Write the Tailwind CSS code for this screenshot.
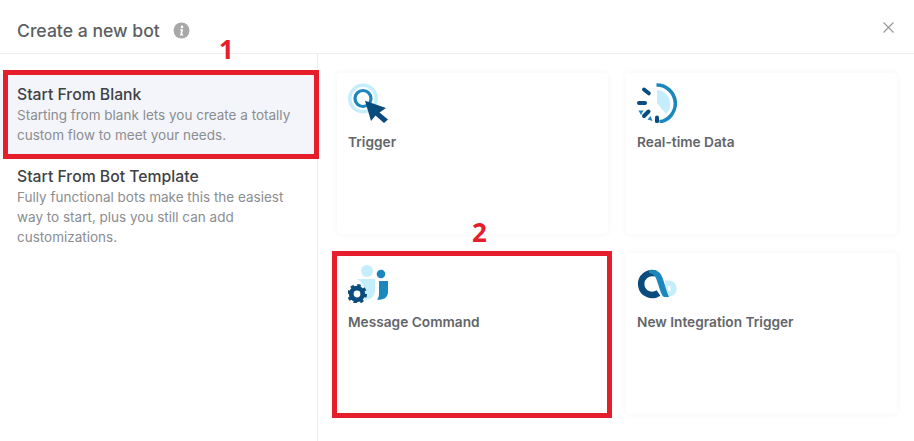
<!DOCTYPE html>
<html lang="en">
<head>
    <meta charset="UTF-8">
    <title>Create a new bot</title>
    <script src="https://cdn.jsdelivr.net/npm/@tailwindcss/browser@4"></script>
</head>
<body class="bg-white font-['Inter',sans-serif] antialiased">
<div class="relative w-[914px] h-[441px] overflow-hidden bg-white">

    <!-- Header -->
    <header class="h-[54px] border-b border-[#eeeeee] pl-[17px] pr-[20px] flex items-center">
        <h1 class="text-[17.6px] font-medium text-[#5c5f62] mt-[9px]">Create a new bot</h1>
        <svg class="ml-[13px] mt-[8px] w-[17px] h-[17px]" viewBox="0 0 17 17">
            <circle cx="8.5" cy="8.5" r="8" fill="#a8a8a8"/>
            <circle cx="9" cy="4.9" r="1.3" fill="#fff"/>
            <path d="M7.2 7.3h2.9l-1 5h1v1.2H7.1l1-5h-.9z" fill="#fff"/>
        </svg>
        <svg class="ml-auto mt-[2px] w-[11px] h-[11px]" viewBox="0 0 11 11" fill="none" stroke="#9a9a9a" stroke-width="1.2">
            <path d="M.5.5l10 10M10.5.5l-10 10"/>
        </svg>
    </header>

    <div class="flex h-[387px]">
        <!-- Left menu -->
        <aside class="w-[318px] shrink-0 border-r border-[#eeeeee] pt-[21px]">
            <div class="h-[80px] bg-[#f4f5fa] pl-[17px] pr-3 pt-[11px] mt-[-1px]">
                <h2 class="text-[15.75px] leading-[20px] font-medium text-[#3f4246]">Start From Blank</h2>
                <p class="text-[13.5px] leading-[20px] text-[#8a8d91]">Starting from blank lets you create a totally custom flow to meet your needs.</p>
            </div>
            <div class="pl-[17px] pr-3 pt-[13px]">
                <h2 class="text-[15.75px] leading-[20px] font-medium text-[#3f4246]">Start From Bot Template</h2>
                <p class="text-[13.5px] leading-[20px] text-[#8a8d91]">Fully functional bots make this the easiest way to start, plus you still can add customizations.</p>
            </div>
        </aside>

        <!-- Trigger cards -->
        <main class="flex-1 grid grid-cols-[271px_271px] auto-rows-[161px] gap-x-[18px] gap-y-[19px] pl-[19px] pt-[19px]">
            <div class="rounded-[4px] bg-white shadow-[0_0_6px_rgba(60,70,110,0.06)] pl-[11px] pt-[10px]">
                <svg class="w-[40px] h-[40px]" viewBox="0 0 40 40">
                    <circle cx="15" cy="15.500" r="15" fill="#c4eefb"/>
                    <circle cx="15" cy="15.500" r="11.500" fill="#fff"/>
                    <circle cx="15" cy="15.500" r="8" fill="none" stroke="#1b87bd" stroke-width="3.200"/>
                    <path d="M17 17.700l21 7.300-6.500 4.500 8.500 7-4 3.500-8.500-7.500-4.500 5.500z" fill="#0a4c7d"/>
                </svg>
                <h3 class="mt-[9px] text-[13.7px] leading-[20px] font-semibold text-[#636569]">Trigger</h3>
            </div>
            <div class="rounded-[4px] bg-white shadow-[0_0_6px_rgba(60,70,110,0.06)] pl-[11px] pt-[10px]">
                <svg class="w-[40px] h-[40px]" viewBox="0 0 40 40">
                    <path d="M20 7v13l9 11A14 14 0 0 0 20 7z" fill="#c4eefb"/>
                    <path d="M19.500 2a18.500 18.500 0 0 1 3 36.800" fill="none" stroke="#1b87bd" stroke-width="3.600"/>
                    <g fill="none" stroke="#0a4c7d" stroke-width="4" stroke-linecap="round">
                        <path d="M7 6.500l4.800 3.800"/>
                        <path d="M2 20h6"/>
                        <path d="M7 33l4.500-4.500"/>
                        <path d="M20 34.500v3.800"/>
                    </g>
                    <path d="M1.500 27.500h5l-2.500 4.500zM10.500 36.500l3-3.500 2 5z" fill="#1b87bd"/>
                </svg>
                <h3 class="mt-[9px] text-[13.7px] leading-[20px] font-semibold text-[#636569]">Real-time Data</h3>
            </div>
            <div class="rounded-[4px] bg-white shadow-[0_0_6px_rgba(60,70,110,0.06)] pl-[11px] pt-[10px]">
                <svg class="w-[42px] h-[40px]" viewBox="0 0 42 40">
                    <circle cx="19" cy="8" r="6" fill="#c4eefb"/>
                    <path d="M9 16h18v12a9 9 0 0 1-9 9h-2a16 16 0 0 0 1-8c0-5-3-10-8-13z" fill="#c4eefb"/>
                    <circle cx="33" cy="11" r="4.300" fill="#1b87bd"/>
                    <path d="M31 18h9v11c0 5-4 8.500-11 7.500 2-2 2-4 2-8z" fill="#1b87bd"/>
                    <circle cx="9" cy="31" r="5.800" fill="none" stroke="#0a4c7d" stroke-width="4.800"/>
                    <circle cx="9" cy="31" r="8.500" fill="none" stroke="#0a4c7d" stroke-width="3" stroke-dasharray="3.340 3.340"/>
                </svg>
                <h3 class="mt-[9px] text-[13.7px] leading-[20px] font-semibold text-[#636569]">Message Command</h3>
            </div>
            <div class="rounded-[4px] bg-white shadow-[0_0_6px_rgba(60,70,110,0.06)] pl-[11px] pt-[10px]">
                <svg class="w-[40px] h-[40px]" viewBox="0 0 40 40">
                    <path d="M32 17.500a7.800 8 0 0 1 0 16l-5-1 1-15z" fill="#c4eefb"/>
                    <path d="M31 23h2.500v5h-2.500z" fill="#fff"/>
                    <path d="M18.500 10.500a11 11 0 1 0 3 19.500" fill="none" stroke="#0a4c7d" stroke-width="6.500"/>
                    <path d="M12 7h3c6 0 9 3 11 9l3 10c1 3 2 5.500 3 8h-5c-2-1-3-4-4-7l-3-9c-1-4-3-7-8-8z" fill="#1b87bd"/>
                </svg>
                <h3 class="mt-[9px] text-[13.7px] leading-[20px] font-semibold text-[#636569]">New Integration Trigger</h3>
            </div>
        </main>
    </div>

    <!-- Red annotations -->
    <div class="absolute left-[3px] top-[70px] w-[316px] h-[89px] border-[5px] border-[#e61e2b]"></div>
    <div class="absolute left-[332px] top-[251px] w-[280px] h-[167px] border-[5px] border-[#e61e2b]"></div>
    <span class="absolute left-[219px] top-[33px] text-[26px] leading-[32px] font-bold text-[#e61e2b] font-['Open_Sans',sans-serif]">1</span>
    <span class="absolute left-[472px] top-[216px] text-[26px] leading-[32px] font-bold text-[#e61e2b] font-['Open_Sans',sans-serif]">2</span>
</div>
</body>
</html>
